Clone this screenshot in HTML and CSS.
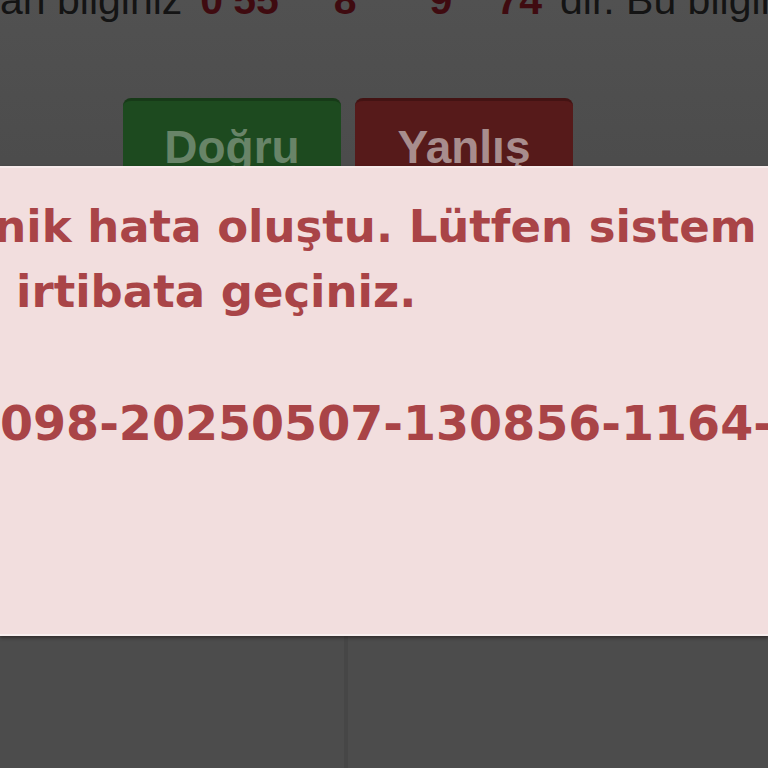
FILE: index.html
```html
<!DOCTYPE html>
<html lang="tr">
<head>
<meta charset="utf-8">
<title>Hata</title>
<link rel="stylesheet" href="styles.css">
</head>
<body>
<div class="page">
  <div class="info-line">
    <span class="txt">an bilginiz</span><span class="num n0">0</span><span class="num n1">55</span><span class="num n2">8</span><span class="num n3">9</span><span class="num n4">74</span><span class="txt t-end">dir. Bu bilginiz</span>
  </div>
  <div class="buttons">
    <div class="btn btn-ok">Doğru</div>
    <div class="btn btn-no">Yanlış</div>
  </div>
  <div class="lower">
    <div class="col col-left"></div>
    <div class="col col-right"></div>
  </div>
</div>
<div class="alert">
  <div class="msg line1">Teknik hata oluştu. Lütfen sistem yöneticisi</div>
  <div class="msg line2">ile irtibata geçiniz.</div>
  <div class="code">098-20250507-130856-1164-</div>
</div>
</body>
</html>
```
FILE: styles.css
```css
html, body {
  margin: 0;
  padding: 0;
}
body {
  background: #4c4c4c;
  width: 768px;
  height: 768px;
  overflow: hidden;
  position: relative;
}
.page {
  display: flex;
  flex-direction: column;
  height: 768px;
  background: linear-gradient(#515151, #4c4c4c 160px);
}
.info-line {
  display: flex;
  white-space: pre;
  font-family: "Liberation Sans", Arial, sans-serif;
  font-size: 41px;
  line-height: 41px;
  margin-top: -20px;
  color: #141414;
  height: 41px;
}
.num {
  color: #3f0b10;
  font-weight: bold;
}
.n0 { margin-left: 18px; }
.n1 { margin-left: 10px; }
.n2 { margin-left: 55px; }
.n3 { margin-left: 73px; }
.n4 { margin-left: 44px; }
.t-end { margin-left: 18px; }
.buttons {
  display: flex;
  gap: 14px;
  padding-left: 123px;
  margin-top: 77px;
}
.btn {
  width: 218px;
  height: 100px;
  border-radius: 8px;
  box-sizing: border-box;
  font-family: "Liberation Sans", Arial, sans-serif;
  font-weight: bold;
  font-size: 46px;
  text-align: center;
  padding-top: 23px;
  line-height: 46px;
}
.btn-ok {
  background: #1d4a1f;
  border-top: 3px solid #173a18;
  color: #688468;
}
.btn-no {
  background: #561a1a;
  border-top: 3px solid #431313;
  color: #a88d8d;
}
.lower {
  flex: 1;
  display: flex;
  margin-top: 370px;
}
.col-left {
  width: 344px;
  border-right: 4px solid #464646;
}
.col-right {
  flex: 1;
}
.alert {
  position: absolute;
  left: 0;
  right: 0;
  top: 166px;
  height: 470px;
  box-sizing: border-box;
  background: #f2dede;
  border-top: 2px solid #f7eaea;
  border-bottom: 2px solid #f8eeee;
  box-shadow: 0 2px 3px rgba(30, 20, 20, 0.55);
  padding-top: 26px;
  color: #a94447;
  font-family: "DejaVu Sans", Verdana, sans-serif;
  font-weight: bold;
  overflow: hidden;
  white-space: nowrap;
}
.msg {
  font-size: 45px;
  line-height: 65px;
}
.line1 { margin-left: -91px; }
.line2 { margin-left: -61px; }
.code {
  font-size: 47.5px;
  line-height: 65px;
  margin-top: 67px;
  margin-left: 0;
}
```
